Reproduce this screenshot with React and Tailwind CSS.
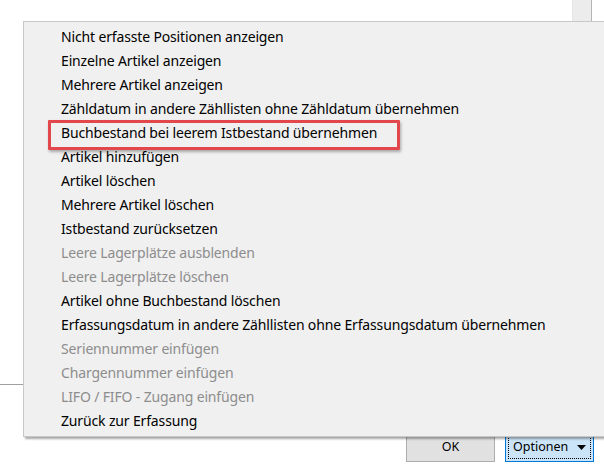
const items = [
  { label: "Nicht erfasste Positionen anzeigen" },
  { label: "Einzelne Artikel anzeigen" },
  { label: "Mehrere Artikel anzeigen" },
  { label: "Zähldatum in andere Zähllisten ohne Zähldatum übernehmen" },
  { label: "Buchbestand bei leerem Istbestand übernehmen" },
  { label: "Artikel hinzufügen" },
  { label: "Artikel löschen" },
  { label: "Mehrere Artikel löschen" },
  { label: "Istbestand zurücksetzen" },
  { label: "Leere Lagerplätze ausblenden", disabled: true },
  { label: "Leere Lagerplätze löschen", disabled: true },
  { label: "Artikel ohne Buchbestand löschen" },
  { label: "Erfassungsdatum in andere Zähllisten ohne Erfassungsdatum übernehmen" },
  { label: "Seriennummer einfügen", disabled: true },
  { label: "Chargennummer einfügen", disabled: true },
  { label: "LIFO / FIFO - Zugang einfügen", disabled: true },
  { label: "Zurück zur Erfassung" },
]

export default function App() {
  return (
    <div className="relative w-[604px] h-[468px] overflow-hidden bg-white font-['Noto_Sans',sans-serif] text-black">
      {/* window behind the menu */}
      <div className="flex flex-col h-full">
        <div className="flex h-[21px] justify-end">
          <div className="w-[20px] bg-[#ececec] border-l border-[#e6e6e6] border-r border-r-[#b5b5b5] mr-[12px]" />
        </div>
        <div className="h-[364px] border-b border-[#a0a0a0]" />
        <div className="flex justify-end gap-[10px] pt-[49px] pr-[10px]">
          <button className="w-[89px] h-[29px] -mt-[1px] bg-[#e1e1e1] border border-[#adadad] text-[12.5px]">
            OK
          </button>
          <button className="w-[89px] h-[29px] -mt-[1px] bg-[#cce4f7] border border-[#0078d7] p-[2px]">
            <span className="flex items-center h-full border border-dotted border-black pl-[4px] pr-[4px] text-[12.5px]">
              <span className="flex-1 text-left">Optionen</span>
              <svg width="9" height="5" viewBox="0 0 9 5">
                <path d="M0 0h9L4.5 5z" fill="#000" />
              </svg>
            </span>
          </button>
        </div>
      </div>

      {/* context menu */}
      <div className="absolute left-[23px] top-[21px] w-[600px] bg-[#f0f0f0] border border-[#c8c8c8] pt-[2px] pb-[4px] shadow-[2px_2px_2px_rgba(0,0,0,0.35)]">
        {items.map((it) => (
          <div
            key={it.label}
            className={`h-6 flex items-center pl-[37px] text-[14px] tracking-[-0.15px] whitespace-nowrap ${it.disabled ? "text-[#8d8d8d]" : "text-black"}`}
          >
            {it.label}
          </div>
        ))}
        <div className="absolute left-[24px] top-[98px] w-[352px] h-[30px] border-[3px] border-[#e1474b] rounded-[1px] shadow-[1px_2px_3px_rgba(0,0,0,0.3)]" />
      </div>
    </div>
  )
}
